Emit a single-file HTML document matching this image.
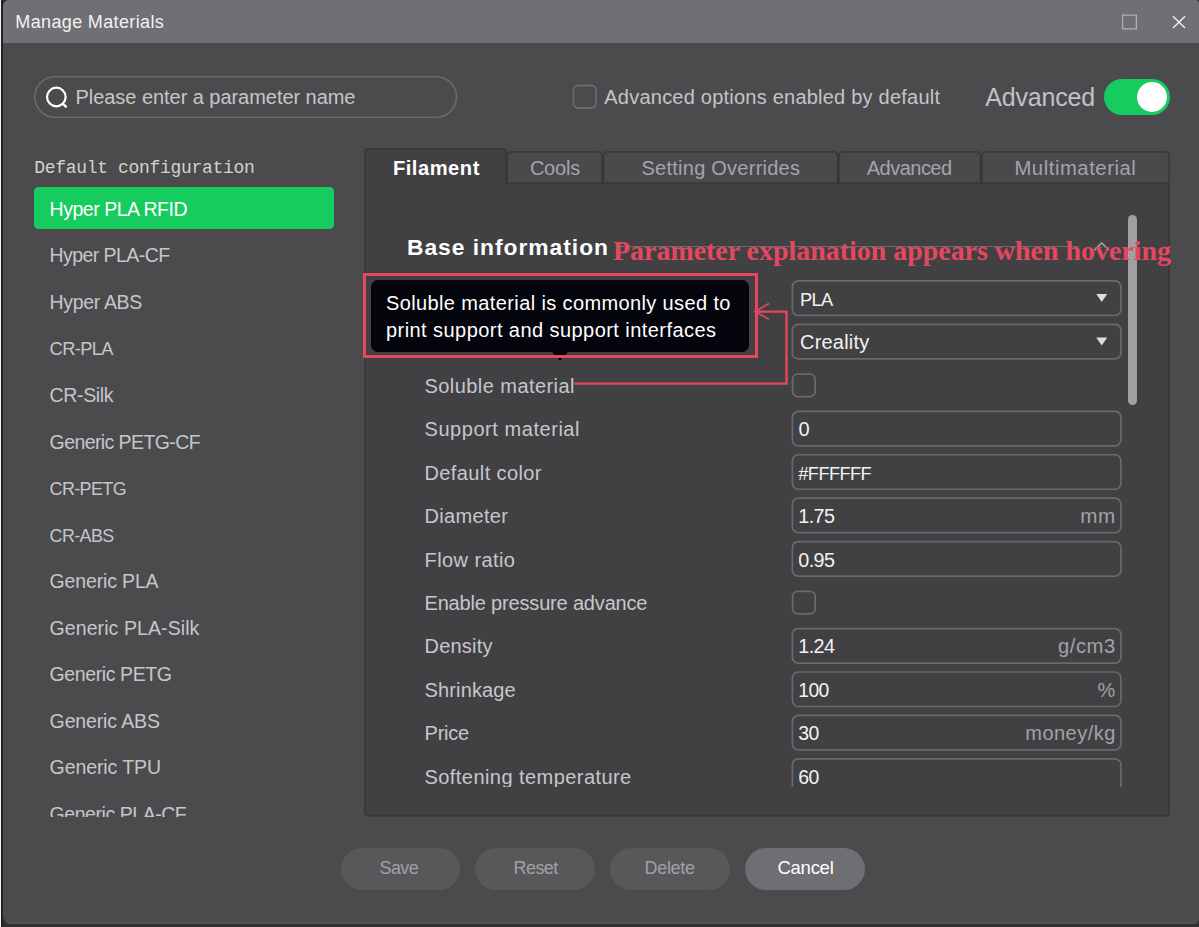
<!DOCTYPE html>
<html lang="en">
<head>
<meta charset="utf-8">
<title>Manage Materials</title>
<style>
html,body{margin:0;padding:0;}
body{width:1199px;height:927px;overflow:hidden;background:#303031;position:relative;font-family:"Liberation Sans", sans-serif;}
.abs{position:absolute;}
.t{position:absolute;white-space:pre;margin:0;padding:0;font-weight:400;display:block;}
ul{list-style:none;margin:0;padding:0;}
button{border:0;margin:0;padding:0;font:inherit;color:inherit;display:block;overflow:visible;text-align:left;}
.serif{font-family:"Liberation Serif", serif;}
.mono{font-family:"Liberation Mono", monospace;}
#edge0{position:absolute;left:0;top:0;width:1px;height:927px;background:#f4f4f4;}
#edge1{position:absolute;left:1px;top:0;width:2px;height:927px;background:#232325;}
#win{position:absolute;left:2.6px;top:0;width:1196.4px;height:923.7px;background:#4b4b4d;border-radius:6px 4px 5px 8px;overflow:hidden;}
#win > *{margin-left:-2.6px;}
#inner{position:absolute;left:0;top:0;width:1199px;height:927px;}
#titlebar{position:absolute;left:0;top:0;width:1199px;height:43.3px;background:#6f6f74;}
#botline{position:absolute;left:0;top:921.6px;width:1199px;height:2.2px;background:#525254;}
#toggle{position:absolute;left:1103.7px;top:78.8px;width:66.5px;height:36.2px;border-radius:18.1px;background:#17cc5f;}
#knob{position:absolute;left:32.9px;top:3.1px;width:30px;height:30px;border-radius:15px;background:#ffffff;}
#list{position:absolute;left:0;top:180px;width:350px;height:636.6px;overflow:hidden;}
#list > *{margin-top:-180px;}
#sel{position:absolute;left:33.6px;top:186.9px;width:300.6px;height:41.9px;border-radius:4.5px;background:#17cc5f;}
#scroll{position:absolute;left:366px;top:186px;width:800px;height:600.8px;overflow:hidden;}
#scroll > *{margin-left:-366px;margin-top:-186px;}
#sbar{position:absolute;left:1128px;top:215.4px;width:8.8px;height:190px;border-radius:4.4px;background:#a0a0a2;}
#sep{position:absolute;left:618px;top:245.5px;width:460px;height:1.4px;background:#6a6a6f;}
.btn{position:absolute;top:847.5px;height:42px;border-radius:21px;}
#tip{position:absolute;left:371px;top:280px;width:377.6px;height:71.8px;border-radius:7px;background:#03040c;}
#redbox{position:absolute;left:363px;top:273px;width:395.2px;height:85px;border:3px solid #e5475e;box-sizing:border-box;}
</style>
</head>
<body>
<div id="edge0"></div><div id="edge1"></div>
<div id="win"><div id="inner">
<div id="titlebar"></div>
<div id="botline"></div>
<svg class="abs" style="left:1120px;top:12px" width="20" height="20" viewBox="0 0 20 20"><rect x="2.6" y="3.1" width="13.8" height="13.8" fill="none" stroke="#aeaeb1" stroke-width="1.3"/></svg>
<svg class="abs" style="left:1170px;top:13px" width="18" height="18" viewBox="0 0 18 18"><path d="M3 3.2 L15 15 M15 3.2 L3 15" fill="none" stroke="#f4f4f4" stroke-width="1.3"/></svg>
<svg class="abs" style="left:0;top:44px" width="1199" height="90" viewBox="0 44 1199 90">
<rect x="34.75" y="76.75" width="421.70" height="40.50" rx="20.40" fill="none" stroke="#69696e" stroke-width="1.7"/>
<rect x="573.50" y="85.50" width="22.50" height="22.50" rx="5.00" fill="none" stroke="#69696e" stroke-width="1.8"/>
<circle cx="56.35" cy="97" r="9.3" fill="none" stroke="#ffffff" stroke-width="2.2"/><path d="M62.9 103.8 L65.9 106.7" stroke="#ffffff" stroke-width="2.3" stroke-linecap="round"/>
</svg>
<div id="toggle"><div id="knob"></div></div>
<div id="list"><ul class="abs" style="left:0;top:0;width:350px;height:1000px">
<li id="sel"></li>
<li class="t" style="left:49.60px;top:197.00px;font-size:19.5px;line-height:25px;letter-spacing:-0.472px;color:#ffffff">Hyper PLA RFID</li>
<li class="t" style="left:49.60px;top:243.00px;font-size:19.5px;line-height:25px;letter-spacing:-0.571px;color:#c6c6ca">Hyper PLA-CF</li>
<li class="t" style="left:49.60px;top:290.00px;font-size:19.5px;line-height:25px;letter-spacing:-0.336px;color:#c6c6ca">Hyper ABS</li>
<li class="t" style="left:49.60px;top:337.00px;font-size:18.26px;line-height:24px;letter-spacing:-0.597px;color:#c6c6ca">CR-PLA</li>
<li class="t" style="left:49.60px;top:383.00px;font-size:19.5px;line-height:25px;letter-spacing:-0.349px;color:#c6c6ca">CR-Silk</li>
<li class="t" style="left:49.60px;top:430.00px;font-size:19.5px;line-height:25px;letter-spacing:-0.592px;color:#c6c6ca">Generic PETG-CF</li>
<li class="t" style="left:49.60px;top:478.00px;font-size:17.91px;line-height:23px;letter-spacing:-0.599px;color:#c6c6ca">CR-PETG</li>
<li class="t" style="left:49.60px;top:525.00px;font-size:17.92px;line-height:23px;letter-spacing:-0.603px;color:#c6c6ca">CR-ABS</li>
<li class="t" style="left:49.60px;top:569.00px;font-size:19.5px;line-height:25px;letter-spacing:-0.156px;color:#c6c6ca">Generic PLA</li>
<li class="t" style="left:49.60px;top:616.00px;font-size:19.5px;line-height:25px;letter-spacing:0.082px;color:#c6c6ca">Generic PLA-Silk</li>
<li class="t" style="left:49.60px;top:662.00px;font-size:19.5px;line-height:25px;letter-spacing:-0.400px;color:#c6c6ca">Generic PETG</li>
<li class="t" style="left:49.60px;top:709.00px;font-size:19.5px;line-height:25px;letter-spacing:-0.134px;color:#c6c6ca">Generic ABS</li>
<li class="t" style="left:49.60px;top:755.00px;font-size:19.5px;line-height:25px;letter-spacing:-0.096px;color:#c6c6ca">Generic TPU</li>
<li class="t" style="left:49.60px;top:802.00px;font-size:19.5px;line-height:25px;letter-spacing:-0.450px;color:#c6c6ca">Generic PLA-CF</li>
</ul></div>
<svg class="abs" style="left:0;top:140px" width="1199" height="690" viewBox="0 140 1199 690">
<path d="M507.10 183.1 L507.10 155.90 Q507.10 151.90 511.10 151.90 L598.10 151.90 Q602.10 151.90 602.10 155.90 L602.10 183.1" fill="#4a4a4c" stroke="#353537" stroke-width="1.3"/>
<path d="M603.40 183.1 L603.40 155.90 Q603.40 151.90 607.40 151.90 L833.65 151.90 Q837.65 151.90 837.65 155.90 L837.65 183.1" fill="#4a4a4c" stroke="#353537" stroke-width="1.3"/>
<path d="M838.95 183.1 L838.95 155.90 Q838.95 151.90 842.95 151.90 L976.55 151.90 Q980.55 151.90 980.55 155.90 L980.55 183.1" fill="#4a4a4c" stroke="#353537" stroke-width="1.3"/>
<path d="M981.85 183.1 L981.85 155.90 Q981.85 151.90 985.85 151.90 L1165.20 151.90 Q1169.20 151.90 1169.20 155.90 L1169.20 183.1" fill="#4a4a4c" stroke="#353537" stroke-width="1.3"/>
<path d="M364.8 811.9 L364.8 153.3 Q364.8 148.8 369.3 148.8 L501.5 148.8 Q506.0 148.8 506.0 153.3 L506.0 183.1 L1169.2 183.1 L1169.2 811.9 Q1169.2 815.9 1165.2 815.9 L368.8 815.9 Q364.8 815.9 364.8 811.9 Z" fill="#414143" stroke="#353537" stroke-width="1.4"/>
</svg>
<div id="scroll"><div class="abs" style="left:0;top:0;width:1199px;height:1200px">
<div id="sep"></div>
<svg class="abs" style="left:1092px;top:238px" width="20" height="16" viewBox="0 0 20 16"><path d="M2.4 12.2 L9.6 5 L17 12.2" fill="none" stroke="#9c9ca2" stroke-width="1.7"/></svg>
<svg class="abs" style="left:0;top:0" width="1199" height="900" viewBox="0 0 1199 900">
<rect x="792.35" y="280.95" width="328.60" height="34.50" rx="6.00" fill="none" stroke="#69696e" stroke-width="1.7"/><path d="M1096.3 294.10 L1107.2 294.10 L1101.75 302.00 Z" fill="#dededf"/>
<rect x="792.35" y="324.40" width="328.60" height="34.50" rx="6.00" fill="none" stroke="#69696e" stroke-width="1.7"/><path d="M1096.3 337.55 L1107.2 337.55 L1101.75 345.45 Z" fill="#dededf"/>
<rect x="792.35" y="411.30" width="328.60" height="34.50" rx="6.00" fill="none" stroke="#69696e" stroke-width="1.7"/>
<rect x="792.35" y="454.75" width="328.60" height="34.50" rx="6.00" fill="none" stroke="#69696e" stroke-width="1.7"/>
<rect x="792.35" y="498.20" width="328.60" height="34.50" rx="6.00" fill="none" stroke="#69696e" stroke-width="1.7"/>
<rect x="792.35" y="541.65" width="328.60" height="34.50" rx="6.00" fill="none" stroke="#69696e" stroke-width="1.7"/>
<rect x="792.35" y="628.55" width="328.60" height="34.50" rx="6.00" fill="none" stroke="#69696e" stroke-width="1.7"/>
<rect x="792.35" y="672.00" width="328.60" height="34.50" rx="6.00" fill="none" stroke="#69696e" stroke-width="1.7"/>
<rect x="792.35" y="715.45" width="328.60" height="34.50" rx="6.00" fill="none" stroke="#69696e" stroke-width="1.7"/>
<rect x="792.35" y="758.90" width="328.60" height="34.50" rx="6.00" fill="none" stroke="#69696e" stroke-width="1.7"/>
<rect x="792.60" y="374.05" width="22.50" height="22.50" rx="5.00" fill="none" stroke="#69696e" stroke-width="1.8"/>
<rect x="792.60" y="591.30" width="22.50" height="22.50" rx="5.00" fill="none" stroke="#69696e" stroke-width="1.8"/>
</svg>
<h3 class="t" style="left:407.00px;top:232.00px;font-size:22.8px;line-height:30px;letter-spacing:0.985px;color:#ffffff;font-weight:700">Base information</h3>
<label class="t" style="left:424.50px;top:373.00px;font-size:20px;line-height:26px;letter-spacing:0.439px;color:#c6c6cc">Soluble material</label>
<label class="t" style="left:424.50px;top:416.00px;font-size:20px;line-height:26px;letter-spacing:0.550px;color:#c6c6cc">Support material</label>
<label class="t" style="left:424.50px;top:460.00px;font-size:20px;line-height:26px;letter-spacing:0.393px;color:#c6c6cc">Default color</label>
<label class="t" style="left:424.50px;top:503.00px;font-size:20px;line-height:26px;letter-spacing:0.337px;color:#c6c6cc">Diameter</label>
<label class="t" style="left:424.50px;top:547.00px;font-size:20px;line-height:26px;letter-spacing:0.422px;color:#c6c6cc">Flow ratio</label>
<label class="t" style="left:424.50px;top:590.00px;font-size:20px;line-height:26px;letter-spacing:-0.174px;color:#c6c6cc">Enable pressure advance</label>
<label class="t" style="left:424.50px;top:633.00px;font-size:20px;line-height:26px;letter-spacing:0.216px;color:#c6c6cc">Density</label>
<label class="t" style="left:424.50px;top:677.00px;font-size:20px;line-height:26px;letter-spacing:0.148px;color:#c6c6cc">Shrinkage</label>
<label class="t" style="left:424.50px;top:720.00px;font-size:20px;line-height:26px;letter-spacing:-0.207px;color:#c6c6cc">Price</label>
<label class="t" style="left:424.50px;top:764.00px;font-size:20px;line-height:26px;letter-spacing:0.442px;color:#c6c6cc">Softening temperature</label>
<div class="t" style="left:800.00px;top:288.00px;font-size:18.25px;line-height:24px;letter-spacing:-0.602px;color:#f2f2f2">PLA</div>
<div class="t" style="left:800.00px;top:329.00px;font-size:20px;line-height:26px;letter-spacing:0.215px;color:#f2f2f2">Creality</div>
<div class="t" style="left:798.60px;top:416.00px;font-size:20px;line-height:26px;letter-spacing:0.000px;color:#f2f2f2">0</div>
<div class="t" style="left:798.30px;top:462.00px;font-size:18.26px;line-height:24px;letter-spacing:-0.599px;color:#f2f2f2">#FFFFFF</div>
<div class="t" style="left:798.30px;top:503.00px;font-size:19.78px;line-height:26px;letter-spacing:-0.603px;color:#f2f2f2">1.75</div>
<div class="t" style="left:798.30px;top:547.00px;font-size:19.78px;line-height:26px;letter-spacing:-0.603px;color:#f2f2f2">0.95</div>
<div class="t" style="left:798.30px;top:633.00px;font-size:19.78px;line-height:26px;letter-spacing:-0.603px;color:#f2f2f2">1.24</div>
<div class="t" style="left:798.30px;top:678.00px;font-size:19.3px;line-height:25px;letter-spacing:-0.603px;color:#f2f2f2">100</div>
<div class="t" style="left:798.30px;top:721.00px;font-size:19.42px;line-height:25px;letter-spacing:-0.605px;color:#f2f2f2">30</div>
<div class="t" style="left:798.30px;top:765.00px;font-size:19.42px;line-height:25px;letter-spacing:-0.605px;color:#f2f2f2">60</div>
<div class="t" style="left:1080.30px;top:502.00px;font-size:20.67px;line-height:27px;letter-spacing:0.555px;color:#a2a2aa">mm</div>
<div class="t" style="left:1058.00px;top:633.00px;font-size:20.23px;line-height:26px;letter-spacing:0.551px;color:#a2a2aa">g/cm3</div>
<div class="t" style="left:1097.60px;top:677.00px;font-size:20px;line-height:26px;letter-spacing:0.000px;color:#a2a2aa">%</div>
<div class="t" style="left:1025.30px;top:720.00px;font-size:20px;line-height:26px;letter-spacing:0.469px;color:#a2a2aa">money/kg</div>
</div></div>
<div id="sbar"></div>
<button type="button" class="btn" style="left:340.6px;width:119.6px;background:#58585a"><span class="t" style="left:39.00px;top:9.50px;font-size:17.94px;line-height:23px;letter-spacing:-0.598px;color:#a0a0a6">Save</span></button>
<button type="button" class="btn" style="left:475px;width:120px;background:#58585a"><span class="t" style="left:38.60px;top:9.50px;font-size:18px;line-height:23px;letter-spacing:-0.583px;color:#a0a0a6">Reset</span></button>
<button type="button" class="btn" style="left:610px;width:120.4px;background:#58585a"><span class="t" style="left:34.50px;top:9.50px;font-size:18px;line-height:23px;letter-spacing:-0.306px;color:#a0a0a6">Delete</span></button>
<button type="button" class="btn" style="left:745px;width:120px;background:#6e6e73"><span class="t" style="left:32.50px;top:8.50px;font-size:18.5px;line-height:24px;letter-spacing:-0.269px;color:#ffffff">Cancel</span></button>
<h1 class="t" style="left:15.30px;top:11.00px;font-size:18px;line-height:23px;letter-spacing:0.361px;color:#f2f2f2">Manage Materials</h1>
<div class="t" style="left:75.50px;top:84.00px;font-size:20px;line-height:26px;letter-spacing:-0.046px;color:#c6c6ca">Please enter a parameter name</div>
<label class="t" style="left:604.30px;top:84.00px;font-size:20px;line-height:26px;letter-spacing:0.226px;color:#c4c4c8">Advanced options enabled by default</label>
<label class="t" style="left:985.30px;top:81.00px;font-size:25px;line-height:32px;letter-spacing:-0.200px;color:#c0c0c8">Advanced</label>
<h2 class="t mono" style="left:34.20px;top:157.00px;font-size:18px;line-height:23px;letter-spacing:-0.312px;color:#d4d2c8">Default configuration</h2>
<div class="t" style="left:392.90px;top:155.00px;font-size:20.1px;line-height:26px;letter-spacing:0.548px;color:#ffffff;font-weight:700">Filament</div>
<div class="t" style="left:529.90px;top:155.00px;font-size:20px;line-height:26px;letter-spacing:-0.210px;color:#a4a4ac">Cools</div>
<div class="t" style="left:641.50px;top:155.00px;font-size:20px;line-height:26px;letter-spacing:0.249px;color:#a4a4ac">Setting Overrides</div>
<div class="t" style="left:866.80px;top:155.00px;font-size:20px;line-height:26px;letter-spacing:-0.524px;color:#a4a4ac">Advanced</div>
<div class="t" style="left:1014.40px;top:155.00px;font-size:20.27px;line-height:26px;letter-spacing:0.551px;color:#a4a4ac">Multimaterial</div>
<!-- hover tooltip + annotation overlay -->
<svg class="abs" style="left:545px;top:348px" width="30" height="16" viewBox="0 0 30 16"><path d="M6 3 L24 3 L15 12.8 Z" fill="#03040c"/></svg>
<div id="tip"></div>
<div id="redbox"></div>
<svg class="abs" style="left:560px;top:295px" width="240" height="100" viewBox="0 0 240 100"><path d="M14.5 88.6 L226.5 88.6 L226.5 16.6 L196 16.6" fill="none" stroke="#e5475e" stroke-width="2.4" stroke-linejoin="miter"/><path d="M209 8.6 L195 16.6 L209 24.2" fill="none" stroke="#e5475e" stroke-width="1.7"/></svg>
<div class="t" style="left:386.00px;top:290.00px;font-size:20px;line-height:26px;letter-spacing:0.378px;color:#ffffff">Soluble material is commonly used to</div>
<div class="t" style="left:386.00px;top:317.00px;font-size:20px;line-height:26px;letter-spacing:0.439px;color:#ffffff">print support and support interfaces</div>
<div class="t serif" style="left:613.00px;top:233.00px;font-size:28px;line-height:36px;letter-spacing:-0.035px;color:#e5475e;font-weight:700">Parameter explanation appears when hovering</div>
</div></div>
</body>
</html>
